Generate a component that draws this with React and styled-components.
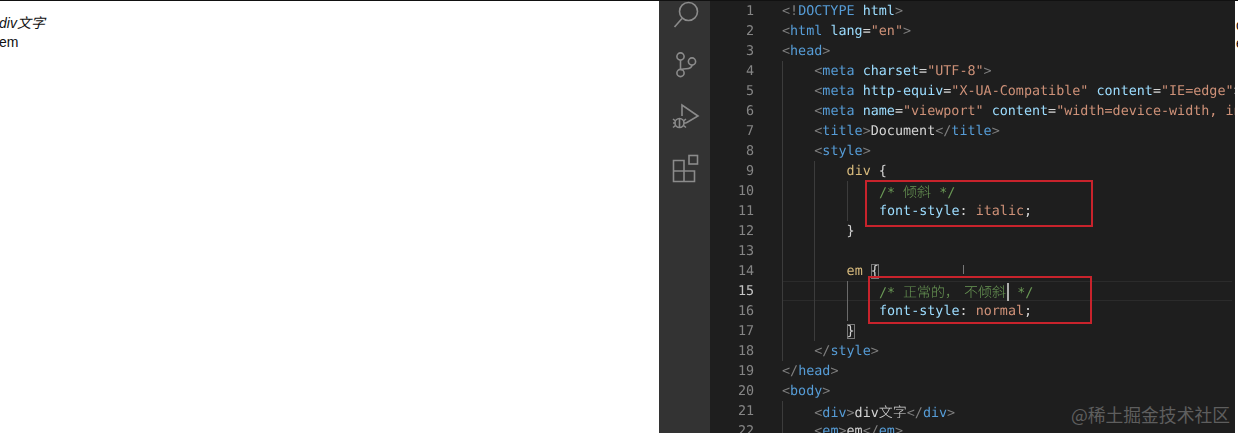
import React from 'react'
import styled, { createGlobalStyle } from 'styled-components'

const Global = createGlobalStyle`
  html, body { margin: 0; padding: 0; background: #fff; }
  #root { width: 1238px; height: 433px; overflow: hidden; }
`

const Page = styled.div`
  display: flex;
  width: 1238px;
  height: 433px;
  border-top: 1px solid #111;
  box-sizing: border-box;
  overflow: hidden;
`

const Preview = styled.div`
  width: 660px;
  flex: none;
  margin-left: -1px;
  padding-top: 13px;
  box-sizing: border-box;
  font: 14px/18.5px 'Liberation Sans', 'Noto Sans CJK SC', sans-serif;
  color: #111;
`

const ItalicLine = styled.div`
  font-style: italic;
`

const ActivityBar = styled.div`
  width: 51px;
  flex: none;
  background: #333333;
  display: flex;
  flex-direction: column;
  align-items: center;
  gap: 22px;
  padding-left: 3px;
  box-sizing: border-box;
  margin-top: -3px;
  color: #8b8b8b;
  filter: blur(0.3px);
`

const Editor = styled.div`
  flex: 1;
  position: relative;
  background: #1e1e1e;
  min-width: 0;
  overflow: hidden;
`

const Row = styled.div`
  display: flex;
  height: 20px;
  font: 13.4px/22px 'DejaVu Sans Mono', 'Noto Sans CJK SC', monospace;
  text-rendering: geometricPrecision;
  white-space: pre;
  color: #d4d4d4;
  filter: blur(0.3px);
`

const LineNo = styled.span`
  width: 44px;
  flex: none;
  text-align: right;
  color: ${p => (p.$active ? '#c6c6c6' : '#858585')};
`

const Code = styled.span`
  display: flex;
  flex: 1;
  margin-left: 28px;
  margin-right: 3px;
  min-width: 0;
  box-shadow: ${p => (p.$active ? 'inset 0 1px 0 #2b2b2b, inset 0 -1px 0 #2b2b2b' : 'none')};
`

const Guide = styled.span`
  width: 32.3px;
  flex: none;
  height: 20px;
  box-sizing: border-box;
  border-left: 1px solid ${p => (p.$on ? '#6a6a6a' : '#3c3c3c')};
`

const Punct = styled.span`color: #808080;`
const Tag = styled.span`color: #569cd6;`
const Attr = styled.span`color: #9cdcfe;`
const Str = styled.span`color: #ce9178;`
const Sel = styled.span`color: #d7ba7d;`
const Comment = styled.span`color: #6a9955;`

const Cjk = styled.span`
  font-family: 'Noto Sans CJK SC', sans-serif;
  font-size: 14px;
  font-weight: 300;
`

const WideGap = styled.span`
  display: inline-block;
  width: 5px;
`

const Matched = styled.span`
  outline: 1px solid #777;
  outline-offset: -1px;
`

const Caret = styled.span`
  display: inline-block;
  width: 2px;
  height: 18px;
  background: #aeafad;
  vertical-align: -4px;
  margin-left: 1px;
`

// red marks drawn on top of the recording
const Mark = styled.div`
  position: absolute;
  box-sizing: border-box;
  border: 2px solid #c8232c;
  left: ${p => p.$x}px;
  top: ${p => p.$y}px;
  width: ${p => p.$w}px;
  height: ${p => p.$h}px;
`

const Pointer = styled.div`
  position: absolute;
  left: 253px;
  top: 264px;
  width: 1px;
  height: 9px;
  background: #777;
`

const Watermark = styled.div`
  position: absolute;
  right: 5px;
  top: 403px;
  font: 17.8px/20px 'Noto Sans CJK SC', 'Liberation Sans', sans-serif;
  color: #5e5e5e;
  white-space: nowrap;
`

const RightEdge = styled.div`
  width: 3px;
  flex: none;
  padding: 15px 0 0 1px;
  box-sizing: border-box;
  background: #fff;
  overflow: hidden;
  font: 14px/18px 'Liberation Sans', sans-serif;
  color: #111;
`

const Open = ({ name }) => <><Punct>&lt;</Punct><Tag>{name}</Tag></>
const Close = ({ name }) => <><Punct>&lt;/</Punct><Tag>{name}</Tag><Punct>&gt;</Punct></>
const Gt = () => <Punct>&gt;</Punct>
const A = ({ k, v }) => <> <Attr>{k}</Attr>=<Str>"{v}"</Str></>

const lines = [
  { guides: 0, code: <><Punct>&lt;!</Punct><Tag>DOCTYPE</Tag> <Attr>html</Attr><Gt /></> },
  { guides: 0, code: <><Open name="html" /><A k="lang" v="en" /><Gt /></> },
  { guides: 0, code: <><Open name="head" /><Gt /></> },
  { guides: 1, code: <><Open name="meta" /><A k="charset" v="UTF-8" /><Gt /></> },
  { guides: 1, code: <><Open name="meta" /><A k="http-equiv" v="X-UA-Compatible" /><A k="content" v="IE=edge" /><Gt /></> },
  { guides: 1, code: <><Open name="meta" /><A k="name" v="viewport" /> <Attr>content</Attr>=<Str>"width=device-width, initial-scale=1.0"</Str></> },
  { guides: 1, code: <><Open name="title" /><Gt />Document<Close name="title" /></> },
  { guides: 1, code: <><Open name="style" /><Gt /></> },
  { guides: 2, code: <><Sel>div</Sel> {'{'}</> },
  { guides: 3, code: <Comment>/* <Cjk>倾斜</Cjk> */</Comment> },
  { guides: 3, code: <><Attr>font-style</Attr>: <Str>italic</Str>;</> },
  { guides: 2, code: <>{'}'}</> },
  { guides: 2, code: null },
  { guides: 2, code: <><Sel>em</Sel> <Matched>{'{'}</Matched></> },
  { guides: 3, active: true, code: <Comment>/* <Cjk>正常的，<WideGap />不倾斜</Cjk><Caret /> */</Comment> },
  { guides: 3, active: true, code: <><Attr>font-style</Attr>: <Str>normal</Str>;</> },
  { guides: 2, code: <><Matched>{'}'}</Matched></> },
  { guides: 1, code: <Close name="style" /> },
  { guides: 0, code: <Close name="head" /> },
  { guides: 0, code: <><Open name="body" /><Gt /></> },
  { guides: 1, code: <><Open name="div" /><Gt />div<Cjk>文字</Cjk><Close name="div" /></> },
  { guides: 1, code: <><Open name="em" /><Gt />em<Close name="em" /></> },
]

const SearchIcon = () => (
  <svg width="30" height="30" viewBox="0 0 30 30" fill="none" stroke="currentColor" strokeWidth="1.6">
    <circle cx="17.5" cy="13.5" r="9" />
    <path d="M11 20.500 3.500 29" />
  </svg>
)

const BranchIcon = () => (
  <svg width="30" height="30" viewBox="0 0 30 30" fill="none" stroke="currentColor" strokeWidth="1.6">
    <circle cx="9.5" cy="6.5" r="3.6" />
    <circle cx="9.5" cy="23" r="3.6" />
    <circle cx="21" cy="11.5" r="3.6" />
    <path d="M9.500 10v9.500M21 15c0 3-3 3.600-6 3.800-2.500.2-5.500 1-5.500 1" />
  </svg>
)

const DebugIcon = () => (
  <svg width="30" height="30" viewBox="0 0 30 30" fill="none" stroke="currentColor" strokeWidth="1.6">
    <path d="M11 14V3l16 11-12 7" />
    <circle cx="8.500" cy="21" r="4.500" />
    <path d="M8.500 16.500v9M2 17l2.500 2M2 21h2M2 25.500l2.500-2M15 17l-2.500 2M15 21h-2M15 25.500l-2.500-2" />
  </svg>
)

const ExtensionsIcon = () => (
  <svg width="30" height="30" viewBox="0 0 30 30" fill="none" stroke="currentColor" strokeWidth="1.6">
    <rect x="18" y="1.500" width="8.500" height="8.500" />
    <path d="M2.500 6.500h10.500v21H2.500zM2.500 17h21v10.500H13" />
  </svg>
)

export default function App() {
  return (
    <>
      <Global />
      <Page>
        <Preview>
          <ItalicLine>div文字</ItalicLine>
          <div>em</div>
        </Preview>
        <ActivityBar>
          <SearchIcon />
          <BranchIcon />
          <DebugIcon />
          <ExtensionsIcon />
        </ActivityBar>
        <Editor>
          {lines.map((l, i) => (
            <Row key={i}>
              <LineNo $active={i === 14}>{i + 1}</LineNo>
              <Code $active={i === 14}>
                {Array.from({ length: l.guides }).map((_, g) => (
                  <Guide key={g} $on={l.active && g === 2} />
                ))}
                <span>{l.code}</span>
              </Code>
            </Row>
          ))}
          <Mark $x={155} $y={179} $w={228} $h={47} />
          <Mark $x={158} $y={275} $w={224} $h={48} />
          <Pointer />
          <Watermark>@稀土掘金技术社区</Watermark>
        </Editor>
        <RightEdge>d<br />e</RightEdge>
      </Page>
    </>
  )
}
